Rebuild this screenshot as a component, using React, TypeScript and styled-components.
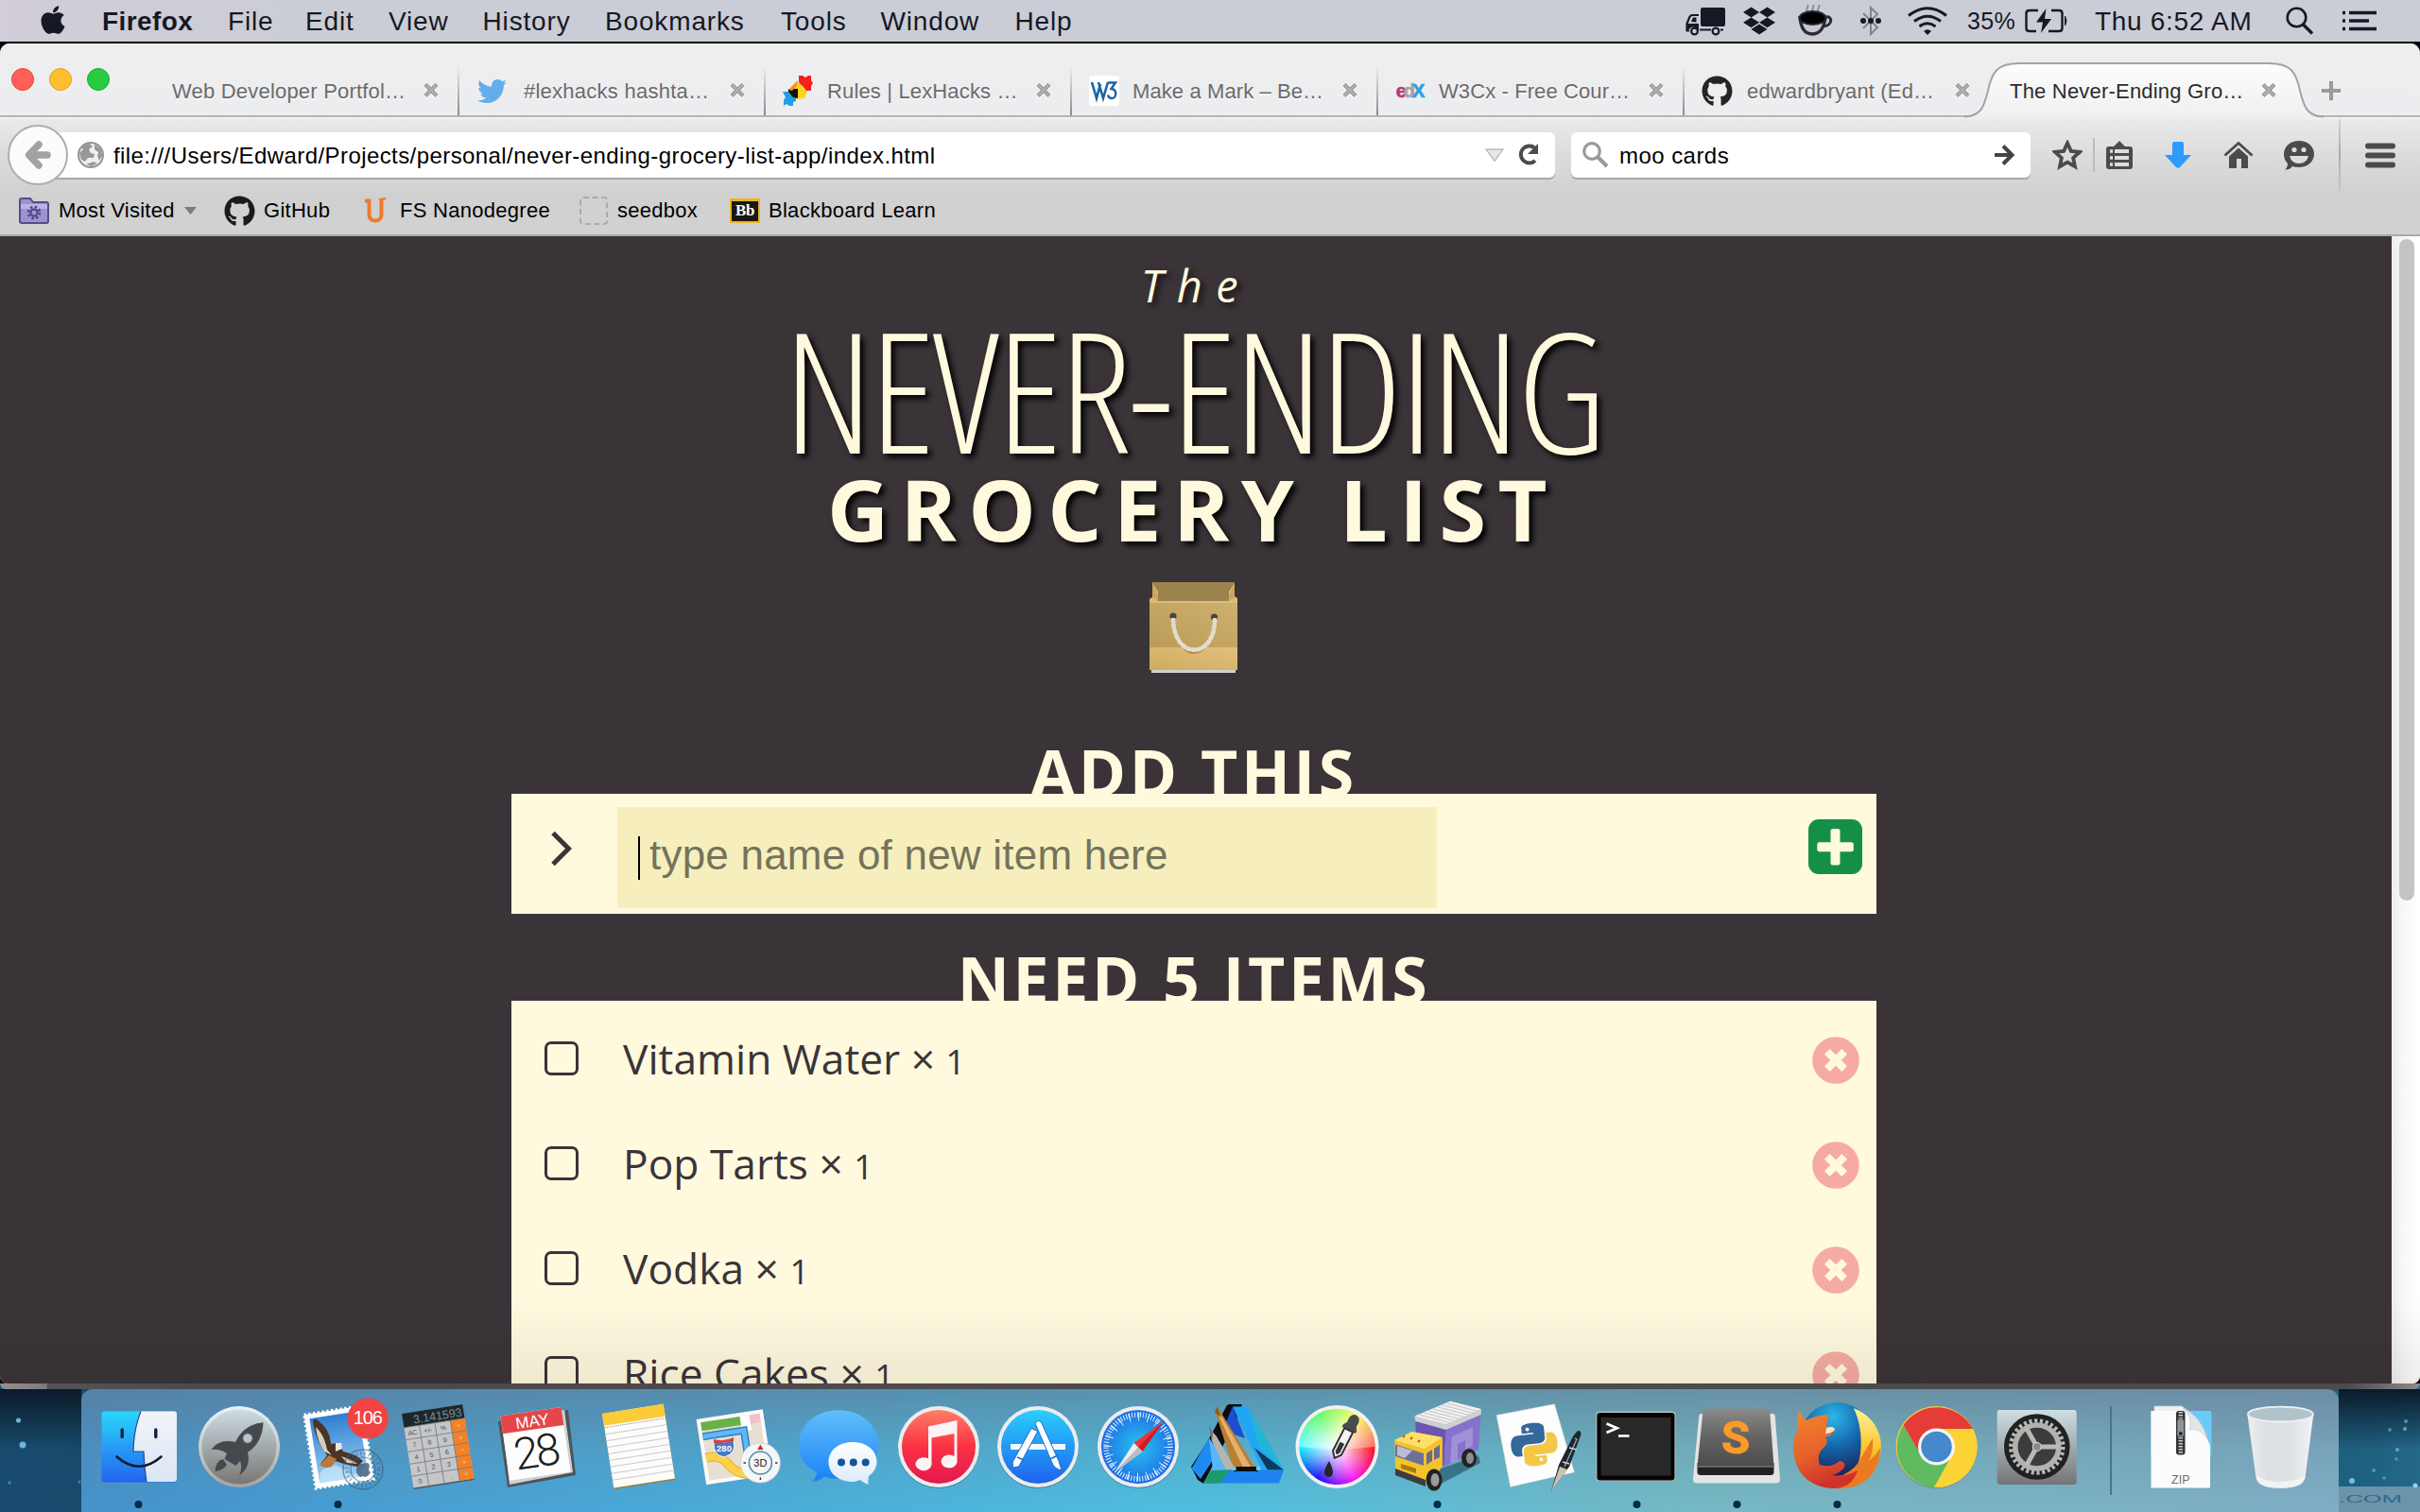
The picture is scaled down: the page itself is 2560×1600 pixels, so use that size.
import React from 'react';
import styled, { createGlobalStyle } from 'styled-components';
import { FaApple, FaDropbox, FaGithub, FaTwitter } from 'react-icons/fa';

const SANS = '"Liberation Sans", Arial, sans-serif';
const OPEN = '"Open Sans", "Noto Sans", sans-serif';
const CREAM = '#fff9de';
const INK = '#3a3438';

const GlobalStyle = createGlobalStyle`
  * { box-sizing: border-box; }
  html, body { margin: 0; padding: 0; background: #0c2a40; overflow: hidden; }
  svg { display: block; flex: none; }
`;

const Desktop = styled.div`
  width: 2560px;
  height: 1600px;
  overflow: hidden;
  display: flex;
  flex-direction: column;
  font-family: ${SANS};
  background: #01020c;
`;

/* ---------- menu bar ---------- */

const MenuBar = styled.header`
  height: 44px;
  flex: none;
  display: flex;
  align-items: center;
  justify-content: space-between;
  background: linear-gradient(90deg, #d2cdd8 0, #cacdd6 14%, #cacdd6 100%);
  color: #161824;
  font-size: 28px;
`;

const MenuGroup = styled.div`
  display: flex;
  align-items: center;
  height: 44px;
`;

const AppleSlot = styled.div`
  width: 108px;
  padding-left: 39px;
  margin-top: -3px;
`;

const MenuItem = styled.span<{ $w: number; $bold?: boolean }>`
  width: ${(p) => p.$w}px;
  padding-top: 1px;
  white-space: nowrap;
  letter-spacing: ${(p) => (p.$bold ? 0.4 : 0.85)}px;
  font-weight: ${(p) => (p.$bold ? 700 : 400)};
`;

const StatusSlot = styled.div<{ $w: number }>`
  width: ${(p) => p.$w}px;
  flex: none;
`;

const StatusText = styled.span<{ $w: number; $size: number; $ls: number }>`
  width: ${(p) => p.$w}px;
  flex: none;
  padding-top: 1px;
  white-space: nowrap;
  font-size: ${(p) => p.$size}px;
  letter-spacing: ${(p) => p.$ls}px;
`;

/* ---------- browser window ---------- */

const Window = styled.section`
  margin-top: 2px;
  height: 1418px;
  flex: none;
  display: flex;
  flex-direction: column;
  border-radius: 10px 10px 8px 8px;
  overflow: hidden;
  background: #eeeff0;
`;

const TabStrip = styled.div`
  height: 78px;
  flex: none;
  display: flex;
  align-items: flex-end;
  background: linear-gradient(#eeeeef, #ecedf0);
  border-bottom: 2px solid #b5b5b5;
`;

const Lights = styled.div`
  width: 162px;
  height: 76px;
  display: flex;
  align-items: center;
  gap: 16px;
  padding-left: 12px;
`;

const Light = styled.i<{ $fill: string; $edge: string }>`
  width: 24px;
  height: 24px;
  border-radius: 50%;
  background: ${(p) => p.$fill};
  border: 1px solid ${(p) => p.$edge};
`;

const Tab = styled.div<{ $active?: boolean; $divider?: boolean }>`
  position: relative;
  width: 324px;
  height: 52px;
  flex: none;
  display: flex;
  align-items: center;
  padding: 0 22px 0 18px;
  color: ${(p) => (p.$active ? '#2b2b2b' : '#6b6b6b')};
  font-size: 22px;
  background: ${(p) =>
    p.$divider
      ? 'linear-gradient(rgba(120,120,120,0), #8a8a8a) right 0 / 2px 100% no-repeat'
      : 'none'};
`;

const TabShape = styled.svg`
  position: absolute;
  left: -30px;
  top: -8px;
`;

const TabIcon = styled.span<{ $gap: number }>`
  width: 32px;
  height: 32px;
  flex: none;
  margin-right: ${(p) => p.$gap}px;
  display: flex;
  align-items: center;
  justify-content: center;
`;

const TabTitle = styled.span<{ $ls: number }>`
  position: relative;
  flex: 1;
  white-space: nowrap;
  padding: 2px 0 0 2px;
  letter-spacing: ${(p) => p.$ls}px;
  text-shadow: 0 2px 0 rgba(255, 255, 255, 0.6);
`;

const TabClose = styled.span`
  position: relative;
`;

const NewTab = styled.div`
  width: 130px;
  height: 52px;
  display: flex;
  align-items: center;
  padding-left: 26px;
`;

const NavArea = styled.div`
  height: 126px;
  flex: none;
  background: linear-gradient(#f6f6f6 0, #e9e9e9 3px, #dcdcdc 40px, #d0d0d0 84px, #d2d2d2 124px);
  border-bottom: 2px solid #a9a9a9;
`;

const NavBar = styled.div`
  height: 80px;
  display: flex;
  align-items: center;
  padding-left: 8px;
`;

const BackButton = styled.div`
  position: relative;
  z-index: 1;
  width: 64px;
  height: 64px;
  flex: none;
  border-radius: 50%;
  border: 2px solid #aeaeae;
  background: #fbfbfb;
  display: flex;
  align-items: center;
  justify-content: center;
`;

const Field = styled.div<{ $w: number; $url?: boolean }>`
  width: ${(p) => p.$w}px;
  height: 48px;
  flex: none;
  display: flex;
  align-items: center;
  background: #fff;
  border-radius: ${(p) => (p.$url ? '0 6px 6px 0' : '6px')};
  box-shadow: 0 2px 0 #a8a8a8;
  margin-left: ${(p) => (p.$url ? -20 : 17)}px;
  padding: ${(p) => (p.$url ? '0 10px 0 30px' : '0 16px 0 12px')};
  font-size: 24px;
  color: #000;
`;

const FieldText = styled.span<{ $ml: number; $ls: number }>`
  flex: 1;
  white-space: nowrap;
  margin-left: ${(p) => p.$ml}px;
  letter-spacing: ${(p) => p.$ls}px;
  padding-top: 2px;
`;

const ToolCell = styled.div<{ $w: number; $ml?: number }>`
  width: ${(p) => p.$w}px;
  margin-left: ${(p) => p.$ml || 0}px;
  height: 80px;
  flex: none;
  display: flex;
  align-items: center;
  justify-content: center;
`;

const ToolDivider = styled.i<{ $h: number; $ml: number; $c: string }>`
  width: 2px;
  height: ${(p) => p.$h}px;
  margin-left: ${(p) => p.$ml}px;
  background: ${(p) => p.$c};
`;

const Bookmarks = styled.div`
  height: 38px;
  display: flex;
  align-items: center;
  padding: 0 0 0 20px;
  font-size: 22px;
  color: #000;
`;

const Bookmark = styled.div<{ $w: number; $gap: number }>`
  width: ${(p) => p.$w}px;
  flex: none;
  display: flex;
  align-items: center;
  white-space: nowrap;
  letter-spacing: 0.28px;
  gap: ${(p) => p.$gap}px;
`;

/* ---------- page ---------- */

const Viewport = styled.div`
  position: relative;
  flex: 1;
  min-height: 0;
  display: flex;
  background: ${INK};
  overflow: hidden;
`;

const Page = styled.main`
  width: 2530px;
  padding-right: 4px;
  display: flex;
  flex-direction: column;
  align-items: center;
  color: ${CREAM};
  font-family: ${OPEN};
  & > * { flex-shrink: 0; }
`;

const Scrollbar = styled.div`
  width: 30px;
  flex: none;
  padding: 3px 6px 0 8px;
  background: linear-gradient(90deg, #ececec, #fafafa 50%, #fff);
`;

const Thumb = styled.div`
  height: 700px;
  border-radius: 8px;
  background: #c4c4c4;
`;

const TitleBlock = styled.h1`
  margin: 0;
  font-weight: 400;
  display: flex;
  flex-direction: column;
  align-items: center;
  text-shadow: 4px 4px 6px #000;
  white-space: nowrap;
`;

const TitleThe = styled.span`
  font-size: 47px;
  line-height: 104px;
  font-style: italic;
  letter-spacing: 14.5px;
  padding-left: 5px;
  text-shadow: 4px 4px 6px rgba(0, 0, 0, 0.7);
`;

const TitleNever = styled.span`
  font-size: 176.5px;
  line-height: 115px;
  font-weight: 300;
  font-stretch: 75%;
  letter-spacing: -2.1px;
`;

const TitleGrocery = styled.span`
  font-size: 90px;
  line-height: 139px;
  font-weight: 700;
  letter-spacing: 12.4px;
  padding-right: 2px;
`;

const BagSlot = styled.div`
  margin-top: 8px;
`;

const SectionTitle = styled.h2<{ $mt: number }>`
  margin: ${(p) => p.$mt}px 0 0;
  height: 46px;
  line-height: 46px;
  font-size: 68px;
  font-weight: 700;
  letter-spacing: 3.6px;
  white-space: nowrap;
`;

const AddCard = styled.div`
  position: relative;
  width: 1444px;
  height: 127px;
  background: ${CREAM};
  display: flex;
  align-items: center;
  padding: 0 15px 0 41px;
`;

const AddInput = styled.div`
  width: 867px;
  height: 107px;
  margin: 8px auto 0 48px;
  background: #f6efbd;
  display: flex;
  align-items: center;
  padding: 0 0 5px 22px;
  font-family: ${SANS};
  font-size: 44px;
  letter-spacing: 0.22px;
  color: #75735b;
`;

const Caret = styled.i`
  width: 2px;
  height: 46px;
  margin: 5px 10px 0 0;
  background: #000;
`;

const ChevronSlot = styled.div`
  margin-top: -11px;
`;

const AddIcon = styled.div`
  margin-top: -15px;
`;

const List = styled.ul`
  position: relative;
  width: 1444px;
  margin: 0;
  padding: 7px 18px 0 35px;
  list-style: none;
  background: ${CREAM};
  color: ${INK};
`;

const Item = styled.li`
  height: 111px;
  display: flex;
  align-items: center;
  font-size: 44.3px;
  line-height: 62px;
  white-space: nowrap;
`;

const Check = styled.i`
  width: 36px;
  height: 36px;
  border: 3px solid ${INK};
  border-radius: 7px;
  margin: -4px 47px 0 0;
`;

const ItemName = styled.span`
  flex: 1;
`;

const Qty = styled.span`
  font-size: 36px;
`;

const DockShade = styled.div`
  position: absolute;
  left: 0;
  right: 0;
  bottom: 0;
  height: 90px;
  background: linear-gradient(rgba(20, 10, 0, 0), rgba(20, 10, 0, 0.07));
`;

/* ---------- dock ---------- */

const DockZone = styled.footer`
  position: relative;
  flex: 1;
  display: flex;
  flex-direction: column;
  background: linear-gradient(90deg, #194b6e 0, #14405f 50%, #1f6180 98%, #24688a 100%);
`;

const WindowEdge = styled.div`
  height: 6px;
  border-radius: 0 0 8px 8px;
  background: linear-gradient(90deg, #958f90 0, #7d787a 49px, #555356 50px, #4b4a4d 200px, #4b4a4d 97%, #8e8a8b 100%);
`;

const DockRow = styled.div`
  flex: 1;
  display: flex;
`;

const Wallpaper = styled.div<{ $w: number }>`
  width: ${(p) => p.$w}px;
  flex: none;
  background: linear-gradient(#0a1a28, rgba(10, 26, 40, 0) 50%);
`;

const Dock = styled.nav`
  width: 2388px;
  height: 130px;
  flex: none;
  display: flex;
  padding-left: 8px;
  border-radius: 12px 12px 0 0;
  background:
    linear-gradient(rgba(95, 120, 145, 0.62), rgba(95, 130, 150, 0.25) 50%, rgba(95, 130, 150, 0)),
    linear-gradient(90deg, #4592cb 0, #49a6d7 22%, #4fbfe0 50%, #76b9c4 72%, #80aec6 100%);
`;

const DockCell = styled.div`
  width: 105.7px;
  flex: none;
`;

const DockSeparator = styled.div`
  width: 46px;
  display: flex;
  justify-content: center;
  padding-top: 18px;
  &::before {
    content: '';
    width: 2px;
    height: 94px;
    background: #4b7587;
    margin-left: 4px;
  }
`;

/* ---------- small drawings ---------- */

const CloseX = () => (
  <svg width="16" height="16" viewBox="0 0 16 16">
    <path d="M2 2.5 14 14.5M14 2.5 2 14.5" stroke="#fff" strokeWidth="4.5" />
    <path d="M2 1.5 14 13.5M14 1.5 2 13.5" stroke="#8b8b8b" strokeWidth="4" />
    <path d="M2.4 1.9 13.6 13.1M13.6 1.9 2.4 13.1" stroke="#b0b0b0" strokeWidth="2.2" />
  </svg>
);

const LexIcon = () => (
  <svg width="32" height="32" viewBox="0 0 32 32">
    <path d="M17 0h4l3 2 3-2h3v5l2 3-2 3v5h-5l-4-5-4-2z" fill="#f8201c" />
    <path d="M0 17h6l8 6v4l-3 1v4H7l-3-2-3 2v-6l2-3z" fill="#1f9fe2" />
    <path d="M17 7 26 17 23 24 15 25 5 16z" fill="#fdd521" />
    <path d="M6 14h10v10l-5-1-5-6z" fill="#111" />
    <path d="M6 15 16 5l-1 6-5 5z" fill="#fb8d1c" />
  </svg>
);

const W3Icon = () => (
  <svg width="32" height="32" viewBox="0 0 32 32">
    <rect width="32" height="32" rx="3" fill="#fff" />
    <path d="M3 7 8 24 12 9M10 7 15 24 20 7" fill="none" stroke="#1a64a8" strokeWidth="2.600" />
    <path d="M20 7.500H28L23.500 14C30 14.500 29.500 24 24 24 21.500 24 20.500 22.500 20 20.500" fill="none" stroke="#1a64a8" strokeWidth="2.400" />
  </svg>
);

const EdxText = styled.span<{ $c: string; $ml?: number }>`
  color: ${(p) => p.$c};
  font-size: 20px;
  font-weight: 700;
  line-height: 32px;
  margin-left: ${(p) => p.$ml || 0}px;
  -webkit-text-stroke: 0.6px ${(p) => p.$c};
`;

const EdxIcon = () => (
  <>
    <EdxText $c="#b5377a">e</EdxText>
    <EdxText $c="#a5a0a6" $ml={-3}>d</EdxText>
    <EdxText $c="#2aa0e0" $ml={-3}>X</EdxText>
  </>
);

const BlackboardBadge = styled.span`
  width: 32px;
  height: 26px;
  border: 2px solid #e8b421;
  border-top-width: 3px;
  background: #1a1712;
  color: #fff;
  font: 700 17px/19px "Liberation Serif", serif;
  letter-spacing: -0.5px;
  text-align: center;
`;

const SeedboxIcon = styled.span`
  width: 30px;
  height: 30px;
  border: 2px dashed #aaa;
  border-radius: 4px;
`;

const UdacityMark = () => (
  <svg width="24" height="28" viewBox="0 0 24 28">
    <path d="M1 3.500H5.500V18C5.500 27 18 26 18.500 19V3" fill="none" stroke="#f07a2a" strokeWidth="4" />
    <path d="M16 2.500 23 1" stroke="#f07a2a" strokeWidth="2.500" />
  </svg>
);

const FolderIcon = () => (
  <svg width="32" height="30" viewBox="0 0 32 30">
    <path d="M1 4a2 2 0 0 1 2-2h9l3 4h14a2 2 0 0 1 2 2v18a2 2 0 0 1-2 2H3a2 2 0 0 1-2-2z" fill="#9a93cf" stroke="#544c8c" strokeWidth="2" />
    <path d="M2 8h28v5H2z" fill="#b9b4e4" />
    <circle cx="16" cy="17" r="6" fill="none" stroke="#4b447f" strokeWidth="2.600" strokeDasharray="2.400 2.300" />
    <circle cx="16" cy="17" r="3.600" fill="none" stroke="#4b447f" strokeWidth="2" />
  </svg>
);

const GlobeIcon = () => (
  <svg width="28" height="28" viewBox="0 0 28 28">
    <circle cx="14" cy="14" r="13" fill="#f0f0f0" stroke="#949494" strokeWidth="2" />
    <path d="M2 12 6 8 4 6Q9 2 13 2L16 5 12 8 14 12 18 13 17 17 11 17 8 21 4 19z" fill="#989898" />
    <path d="M18 3Q26 6 26 15L23 20 21 15 22 11 18 8z" fill="#989898" />
    <path d="M9 24 15 26 21 23 17 21z" fill="#989898" />
  </svg>
);

const ReloadIcon = () => (
  <svg width="26" height="26" viewBox="0 0 26 26">
    <path d="M20.500 5.500A9 9 0 1 0 21 19" fill="none" stroke="#4c4c4c" strokeWidth="4" />
    <path d="M24 1V12H13z" fill="#4c4c4c" />
  </svg>
);

const StatusIcons = () => (
  <>
    <StatusSlot $w={61}>
      <svg width="42" height="31" viewBox="0 0 42 31">
        <rect x="16" y="1" width="26" height="20" rx="2" fill="#161824" />
        <path d="M14 9H7.500C5 9 4.500 10 4 12L1.500 18V25.500H4" fill="none" stroke="#161824" strokeWidth="2.200" />
        <path d="M6 16 8 11.500H11.500V16.500z" fill="#161824" />
        <path d="M2 18H14V25H13A5 5 0 0 0 4 24L2 25z" fill="#161824" />
        <path d="M15 24.500H27M37 24.500H40" stroke="#161824" strokeWidth="2.200" />
        <circle cx="9.500" cy="26" r="3.400" fill="#cacdd6" stroke="#161824" strokeWidth="2.200" />
        <circle cx="32" cy="26" r="3.400" fill="#cacdd6" stroke="#161824" strokeWidth="2.200" />
      </svg>
    </StatusSlot>
    <StatusSlot $w={57}><FaDropbox size={34} /></StatusSlot>
    <StatusSlot $w={67}>
      <svg width="40" height="34" viewBox="0 0 40 34">
        <path d="M11 7C8 5 13 3 11 0M17 7C14 5 19 3 17 0M23 7C20 5 25 3 23 0" fill="none" stroke="#8e9099" strokeWidth="2" />
        <path d="M3 12C4 27 10 31 16 31S29 27 30 12" fill="#c5c8d0" stroke="#2a2b33" strokeWidth="3.500" />
        <ellipse cx="16.500" cy="14" rx="14" ry="7" fill="#000" stroke="#25262e" strokeWidth="2" />
        <path d="M30 13C38 11 38 23 27 23" fill="none" stroke="#2a2b33" strokeWidth="3" />
      </svg>
    </StatusSlot>
    <StatusSlot $w={50}>
      <svg width="22" height="32" viewBox="0 0 22 32">
        <path d="M3 8 18 23 11 30V2L18 9 3 24" fill="none" stroke="#80838d" strokeWidth="2" />
        <circle cx="3" cy="16" r="3" fill="#161824" />
        <circle cx="11" cy="16" r="3" fill="#161824" />
        <circle cx="19" cy="16" r="3" fill="#161824" />
      </svg>
    </StatusSlot>
    <StatusSlot $w={63}>
      <svg width="42" height="30" viewBox="0 0 42 30">
        <path d="M1 9.500Q21-6 41 9.500M7 15.500Q21 5 35 15.500M12.500 21Q21 14.500 29.500 21" fill="none" stroke="#161824" strokeWidth="2.900" />
        <path d="M17 26Q21 22.500 25 26L21 30z" fill="#161824" />
      </svg>
    </StatusSlot>
    <StatusText $w={61} $size={25} $ls={0.3}>35%</StatusText>
    <StatusSlot $w={74}>
      <svg width="46" height="26" viewBox="0 0 46 26">
        <path d="M14 2H5Q1.500 2 1.500 5V21Q1.500 24 5 24H12M28 2H36Q39.500 2 39.500 5V21Q39.500 24 36 24H25" fill="none" stroke="#161824" strokeWidth="2.400" />
        <path d="M42.500 8Q45.500 13 42.500 18z" fill="#161824" stroke="#161824" />
        <path d="M22.500 0 12 14.500H19L17 26 28 11H21z" fill="#161824" />
      </svg>
    </StatusSlot>
    <StatusText $w={202} $size={28} $ls={0.7}>Thu 6:52 AM</StatusText>
    <StatusSlot $w={60}>
      <svg width="30" height="30" viewBox="0 0 30 30">
        <circle cx="11.500" cy="11.500" r="9.800" fill="none" stroke="#161824" strokeWidth="2.600" />
        <path d="M18.500 19 28 28.500" stroke="#161824" strokeWidth="3.400" />
      </svg>
    </StatusSlot>
    <StatusSlot $w={82}>
      <svg width="38" height="22" viewBox="0 0 38 22">
        <path d="M0 2.500H3M0 11H3M0 19.500H3M7 2.500H36M7 11H28M7 19.500H36" stroke="#161824" strokeWidth="3.600" />
      </svg>
    </StatusSlot>
  </>
);

const BagIcon = () => (
  <svg width="94" height="96" viewBox="0 0 94 96">
    <defs>
      <linearGradient id="bagA" x1="0" y1="1" x2="1" y2="0"><stop offset="0" stopColor="#ba9b58" /><stop offset="1" stopColor="#cfb06d" /></linearGradient>
      <linearGradient id="bagB" x1="0" y1="1" x2="1" y2="0"><stop offset="0" stopColor="#cfab60" /><stop offset="1" stopColor="#e2c07a" /></linearGradient>
    </defs>
    <path d="M3 0H90V24H3z" fill="#9c824c" />
    <path d="M3 1 9 10V21H0V18L3 16zM90 1 84 10V21H93V17L90 15z" fill="#dfba6c" />
    <path d="M3 1 9 14V20L3 16zM90 1 84 14V20L90 16z" fill="#c9a75f" />
    <path d="M0 20H93V70H0z" fill="url(#bagA)" />
    <path d="M0 20H93V22H0z" fill="#d9bd82" />
    <path d="M0 69H93V93H0z" fill="url(#bagB)" />
    <path d="M2 93H91V96H2z" fill="#cfd0d4" />
    <circle cx="25" cy="36" r="3.600" fill="#4b453f" />
    <circle cx="68.500" cy="37" r="3.600" fill="#4b453f" />
    <path d="M27 60Q47 92 67 60L65 58Q47 84 30 58z" fill="#ad8c45" />
    <path d="M25 38C25 83 70 83 69 38" fill="none" stroke="#e2dccf" strokeWidth="4.600" strokeDasharray="5 1" />
    <path d="M25 38C25 83 70 83 69 38" fill="none" stroke="#e2dccf" strokeWidth="3.600" />
  </svg>
);

const RemoveIcon = () => (
  <svg width="50" height="50" viewBox="0 0 50 50">
    <circle cx="25" cy="25" r="24.800" fill="#f6aba2" />
    <path d="M15.800 15.800 34.200 34.200M34.200 15.800 15.800 34.200" stroke={CREAM} strokeWidth="8" />
  </svg>
);

/* ---------- dock icons, each on a 106 x 130 tile ---------- */

const Tile = ({ children, running }: { children: React.ReactNode; running?: boolean }) => (
  <DockCell>
    <svg width="106" height="130" viewBox="0 0 106 130" fontFamily={SANS}>
      {children}
      {running && <circle cx="52.500" cy="122" r="4" fill="#032a48" />}
    </svg>
  </DockCell>
);

const Grad = ({ id, a, b, c }: { id: string; a: string; b: string; c?: string }) => (
  <defs>
    <linearGradient id={id} x1="0" y1="0" x2="0" y2="1">
      <stop offset="0" stopColor={a} />
      {c && <stop offset=".5" stopColor={c} />}
      <stop offset="1" stopColor={b} />
    </linearGradient>
  </defs>
);

const Finder = () => (
  <Tile running>
    <Grad id="fi" a="#2ad6fd" b="#2364ee" />
    <Grad id="fj" a="#f2f3f8" b="#dbe6f3" />
    <rect x="13.500" y="23.500" width="79.500" height="75" rx="3" fill="url(#fi)" />
    <path d="M55 23.500H90a3 3 0 0 1 3 3V95a3 3 0 0 1-3 3H61Q58.500 83 58 66H47Q47.500 42 55 23.500z" fill="url(#fj)" />
    <path d="M55 23.500Q47.500 42 47 66H58Q58.500 83 61 98" fill="none" stroke="#1c4f9c" strokeWidth="1.200" />
    <path d="M35.200 43V50.500M70.800 43V50.500" stroke="#13223a" strokeWidth="3.400" strokeLinecap="round" />
    <path d="M29.500 71.500Q53 92 76.500 71.500" fill="none" stroke="#131c2c" strokeWidth="2.600" strokeLinecap="round" />
  </Tile>
);

const Launchpad = () => (
  <Tile>
    <Grad id="la" a="#cddde3" b="#797673" />
    <Grad id="lb" a="#e8f4f8" b="#a5a3a1" />
    <circle cx="53" cy="61" r="43" fill="url(#lb)" />
    <circle cx="53" cy="61" r="39.500" fill="url(#la)" />
    <path d="M78.500 35.300Q58 37 49 56Q32 52 23.400 64Q32 63 40 68L37.500 74L49.500 81L54 76Q57 84 53 91.500Q66 82 62 67Q78 56 78.500 35.300z" fill="#45494d" />
    <path d="M36 74Q28 76 27.500 87Q36 86 40 80" fill="#45494d" />
    <circle cx="62" cy="52" r="5.200" fill="#b9c4c8" stroke="#5d6266" strokeWidth="1" />
  </Tile>
);

const Mail = () => (
  <Tile running>
    <Grad id="ma" a="#2f7fd0" b="#9bd0f4" />
    <g transform="translate(15.500 26.300) rotate(-9)">
      <rect x="1" y="1" width="62" height="79" fill="#fff" />
      <rect x="1" y="1" width="62" height="79" fill="none" stroke="#fff" strokeWidth="3" strokeDasharray="2.200 2.600" />
      <rect x="6" y="6" width="52" height="69" fill="url(#ma)" />
      <path d="M8 64Q24 52 34 66T58 60V75H6z" fill="#d5ecfb" opacity=".6" />
    </g>
    <path d="M26 33Q29 30 32 34Q44 42 45 58L53 57L58 66Q70 68 79 76L73 82Q60 80 50 76L46 80Q38 84 34 79L41 70Q28 54 26 33z" fill="#4a3423" />
    <path d="M29 40Q38 48 41 64L46 70L38 66Q30 54 29 40zM56 71Q66 74 73 79L62 78z" fill="#d6cdbf" />
    <path d="M33 80L43 70L51 74L46 82Q38 85 33 80z" fill="#b77a3a" />
    <path d="M50 57L56 57L57 63L50 66z" fill="#efe8da" />
    <circle cx="79" cy="85" r="21" fill="none" stroke="#3d5a74" strokeWidth="1.400" opacity=".6" />
    <circle cx="79" cy="85" r="13" fill="none" stroke="#3d5a74" strokeWidth="1.200" opacity=".6" />
    <circle cx="79" cy="85" r="17" fill="none" stroke="#3d5a74" strokeWidth="4" strokeDasharray="1.500 3" opacity=".45" />
    <path d="M79 79Q86 76 86 82Q84 86 87 88Q83 95 79 92Q75 95 72 88Q71 78 79 79z" fill="#35536e" opacity=".75" />
    <circle cx="84.300" cy="31" r="21.600" fill="#f14343" />
    <text x="84.300" y="37.300" fontSize="20" textAnchor="middle" fill="#fff" textLength="31">106</text>
  </Tile>
);

const calcKeys = ['AC', '+/-', '%', '÷', '7', '8', '9', '×', '4', '5', '6', '−', '1', '2', '3', '+', '0', '', '.', '='];

const Calculator = () => (
  <Tile>
    <g transform="translate(14 26) rotate(-8.900)">
      <rect width="65" height="81" fill="#55585a" />
      <rect width="65" height="79.500" fill="#c5c6c9" />
      <rect width="65" height="15" fill="#1c272c" />
      <rect x="49.500" y="15" width="15.500" height="64.500" fill="#f28128" />
      {[15, 28, 41, 54, 67].map((y) => <path key={y} d={`M0 ${y}H65`} stroke="#77797c" strokeWidth=".8" />)}
      {[16.5, 33, 49.5].map((x) => <path key={x} d={`M${x} 15V79`} stroke="#77797c" strokeWidth=".8" />)}
      {calcKeys.map((k, i) => (
        <text key={i} x={8.2 + (i % 4) * 16.4} y={24 + Math.floor(i / 4) * 13} fontSize="7" textAnchor="middle" fill={i % 4 === 3 ? '#fbd3b2' : '#4d4f52'}>{k}</text>
      ))}
      <text x="63" y="12.300" fontSize="12.500" textAnchor="end" fill="#7f8f95">3.141593</text>
    </g>
  </Tile>
);

const Calendar = () => (
  <Tile>
    <path d="M10 34 84 22 92 91 20 104z" fill="#4c555b" />
    <path d="M14 34 80 22 89 88 22 101z" fill="#cfd1d3" />
    <g transform="translate(12.300 28.500) rotate(-8.300)">
      <rect width="65" height="69" fill="#fdfdfd" />
      <rect width="65" height="19" fill="#e4474a" />
      <text x="32.500" y="16" fontSize="17" textAnchor="middle" fill="#fff">MAY</text>
      <text x="33" y="59" fontSize="47" fontFamily="Roboto, sans-serif" fontWeight="300" textAnchor="middle" fill="#1e1e1e" textLength="49">28</text>
    </g>
  </Tile>
);

const Notes = () => (
  <Tile>
    <g transform="translate(15 26) rotate(-8.900)">
      <rect width="65.500" height="81" fill="#9a7f3c" />
      <rect width="65.500" height="79.500" fill="#fcfcfa" />
      <rect width="65.500" height="13" fill="#fccb38" />
      <path d="M0 15H65.500" stroke="#8d8d86" strokeWidth="1" strokeDasharray="1.200 1.200" />
      {[22, 29, 36, 43, 50, 57, 64, 71].map((y) => <path key={y} d={`M0 ${y}H65`} stroke="#c9cacb" strokeWidth="1" />)}
    </g>
  </Tile>
);

const Maps = () => (
  <Tile>
    <g transform="translate(8.600 32) rotate(-8.700)">
      <rect width="71" height="70" fill="#fbfbf9" />
      <rect x="4" y="4" width="63" height="62" fill="#e6dfd2" />
      <rect x="4" y="4" width="42" height="9" fill="#69b248" />
      <rect x="46" y="4" width="10" height="16" fill="#fff" />
      <rect x="56" y="4" width="11" height="9" fill="#f2bfcb" />
      <path d="M4 19H48V50" fill="none" stroke="#2f7fc4" strokeWidth="8" />
      <path d="M4 19H48V50" fill="none" stroke="#5fb8f2" strokeWidth="5" />
      <path d="M4 42Q20 40 26 52Q34 64 46 66" fill="none" stroke="#f0b429" strokeWidth="10" />
      <path d="M4 42Q20 40 26 52Q34 64 46 66" fill="none" stroke="#fbd04b" strokeWidth="7.500" />
    </g>
    <path d="M27 56Q38 58 48 54Q52 68 38 72Q26 70 27 56z" fill="#4a78c4" stroke="#fff" strokeWidth="1" />
    <path d="M27 53Q38 56 48 51L48 55Q38 58 27 57z" fill="#d7424a" />
    <text x="38" y="66" fontSize="9.500" fontWeight="700" textAnchor="middle" fill="#fff">280</text>
    <circle cx="76.400" cy="78" r="21" fill="#f5f6f8" stroke="#c9cdd2" strokeWidth=".8" />
    <circle cx="76.400" cy="78" r="12" fill="none" stroke="#568aa4" strokeWidth="1.600" />
    <path d="M76.400 58.500 79.500 64H73.300z" fill="#d8202a" />
    <path d="M58.500 78H61M92 78H94.500M76.400 93.500V96" stroke="#333" strokeWidth="1.500" />
    <text x="76.400" y="82" fontSize="11" textAnchor="middle" fill="#222">3D</text>
  </Tile>
);

const Messages = () => (
  <Tile>
    <Grad id="me" a="#60bffa" b="#1b82f8" />
    <Grad id="mf" a="#ffffff" b="#dceafa" />
    <path d="M53 22.300C77 22.300 95.200 38 95.200 59S77 95 53 95Q44 95 38 92.500Q33 98 25 97.500Q30 93 30 88Q11 78 11 59C11 38 29 22.300 53 22.300z" fill="url(#me)" />
    <path d="M68 56C83 56 93.500 65 93.500 77Q93.500 86 85 92Q84 97 84.500 101Q79 99 76 96Q72 98 68 98C53 98 42.500 89 42.500 77S53 56 68 56z" fill="url(#mf)" />
    <circle cx="56" cy="77.500" r="4" fill="#12559c" />
    <circle cx="68.800" cy="77.500" r="4" fill="#12559c" />
    <circle cx="81.700" cy="77.500" r="4" fill="#12559c" />
  </Tile>
);

const Disc = ({ id, a, b, c, children, r = 39 }: { id: string; a: string; b: string; c?: string; r?: number; children?: React.ReactNode }) => (
  <>
    <Grad id={id} a={a} b={b} c={c} />
    <circle cx="53" cy="62" r="43" fill="rgba(20,50,70,.35)" />
    <circle cx="53" cy="61" r="43" fill="#ececee" />
    <circle cx="53" cy="61" r={r} fill={`url(#${id})`} />
    {children}
  </>
);

const ITunes = () => (
  <Tile>
    <Disc id="it" a="#ff7e66" b="#e3184f" c="#fb3144">
      <path d="M42 39.500 72.500 33V77.500A8.500 7 0 1 1 69.500 71V47L45.500 51.500V80A8.500 7 0 1 1 42 73.500z" fill="#fcf3f4" />
    </Disc>
  </Tile>
);

const AppStore = () => (
  <Tile>
    <Disc id="as" a="#29cefc" b="#1e63ee">
      <rect x="24" y="58" width="58" height="6" fill="#f4f8fd" />
      <path d="M45 41 52 44 34 82 28 84 27 78z" fill="#fafcff" stroke="#1f6fc8" strokeWidth="1" transform="rotate(3 40 60)" />
      <path d="M50 36Q54 31 57 36L75 76 78 86Q70 84 68 78z" fill="#fafcff" stroke="#1f6fc8" strokeWidth="1" />
      <path d="M66 74 74 70M31 72 38 75" stroke="#1f6fc8" strokeWidth="1.600" />
    </Disc>
  </Tile>
);

const Safari = () => (
  <Tile>
    <defs>
      <radialGradient id="sa"><stop offset="0" stopColor="#28c5ee" /><stop offset="1" stopColor="#1e70e6" /></radialGradient>
    </defs>
    <Disc id="sx" a="#1e8df5" b="#1e5fe0">
      <circle cx="53" cy="61" r="38.500" fill="url(#sa)" />
      <circle cx="53" cy="61" r="34" fill="none" stroke="#e5f2fd" strokeWidth="5.500" strokeDasharray="1 2" />
      <circle cx="53" cy="61" r="32" fill="none" stroke="#e5f2fd" strokeWidth="9" strokeDasharray="1 9.053" />
      <path d="M80 34 57.500 66 48.500 57z" fill="#f0343b" />
      <path d="M80 34 57.500 66 53 61.500z" fill="#c81f25" />
      <path d="M28 88 57.500 66 48.500 57z" fill="#ededed" />
      <path d="M28 88 57.500 66 53 61.500z" fill="#b9bcc0" />
    </Disc>
  </Tile>
);

const Designer = () => (
  <Tile>
    <path d="M41 17 43 16H57L50 34L16 100L10 96L3 82L20 56z" fill="#0a0d12" />
    <path d="M47 18.500H63L101 85.500L96.500 90H80z" fill="#22a5f6" />
    <path d="M63 18.500 101 85.500 74 60z" fill="#1fb6d8" />
    <path d="M70 62 101 85.500H84z" fill="#0c3a5c" />
    <path d="M47 18.500 36 44 60 52z" fill="#1b4fd0" />
    <path d="M16 99.500 26 85.500H101L96 99.500z" fill="#1e83f0" />
    <path d="M16 99.500 24 86 44 85.500 34 99.500z" fill="#1d9a6c" />
    <path d="M3.500 84 22 52 32 66 13 95z" fill="#1f8bf2" />
    <path d="M22 52 32 66 44 85 26 86z" fill="#58b7f5" />
    <path d="M28 22 33 22 70 82 60 85.500 48 85z" fill="#b97d33" />
    <path d="M31 26 36 30 66 82 58 83z" fill="#e2b26c" />
    <path d="M28 24 31 18 34 30z" fill="#8b5b1c" />
    <path d="M23 42 30 50 50 85 40 85 25 55z" fill="#b9b3ae" />
    <path d="M22 38 26 47 25 55z" fill="#6e6a68" />
    <path d="M48 84.500H74" stroke="#0b0e12" strokeWidth="5" />
    <rect x="46.500" y="82" width="4" height="4" fill="#5fd0f0" />
    <rect x="72" y="82" width="4" height="4" fill="#5fd0f0" />
  </Tile>
);

const wheel = Array.from({ length: 60 }, (_, i) => {
  const a0 = ((i * 6 - 90 - 0.4) * Math.PI) / 180;
  const a1 = ((i * 6 - 84 + 0.4) * Math.PI) / 180;
  const p = (a: number) => `${52.5 + 40 * Math.cos(a)} ${61 + 40 * Math.sin(a)}`;
  return { d: `M52.5 61L${p(a0)}A40 40 0 0 1 ${p(a1)}z`, fill: `hsl(${(450 - i * 6) % 360} 95% 52%)` };
});

const ColorPicker = () => (
  <Tile>
    <defs>
      <radialGradient id="cw"><stop offset="0" stopColor="#fff" /><stop offset=".35" stopColor="#fff" stopOpacity=".65" /><stop offset="1" stopColor="#fff" stopOpacity="0" /></radialGradient>
    </defs>
    <circle cx="52.500" cy="61" r="44" fill="#f1f1f1" />
    {wheel.map((s, i) => <path key={i} d={s.d} fill={s.fill} />)}
    <circle cx="52.500" cy="61" r="40" fill="url(#cw)" />
    <path d="M12.500 61A40 40 0 0 1 92.500 61Q52 66 12.500 61z" fill="#fff" opacity=".35" />
    <g transform="translate(67 39) rotate(27)">
      <path d="M-5.500-2Q-7-12 0-13Q7-12 5.500-2L8 2V5H-8V2z" fill="#4a4b4e" />
      <path d="M-5 5V32L0 38L5 32V5z" fill="#f3f3f3" stroke="#333" strokeWidth="2" />
      <path d="M-2.500 20H2.500V31L0 34-2.500 31z" fill="#333" />
    </g>
    <path d="M44 76Q38 86 39 89A4.500 4.500 0 0 0 48 88Q48 84 44 76z" fill="#262626" />
  </Tile>
);

const Truck = () => (
  <Tile running>
    <path d="M45 106 98 78 96 70 56 84z" fill="rgba(20,50,70,.5)" />
    <path d="M29.300 33 61.700 42 59.600 82 30 60z" fill="#6a55b3" />
    <path d="M61.700 42 98.700 26 95.800 64 59.600 82z" fill="#8672cc" />
    <path d="M68 50 90 40V60L82 64V54L74 58V76L66 78z" fill="#a597dc" opacity=".8" />
    <path d="M28.400 29 66.300 12.700 99 21.700 98.700 27 61.700 43 29.300 34z" fill="#cfcfcf" />
    <path d="M28.400 28.500 66.300 12.700 99 21 61.700 37z" fill="#f1f1f1" />
    {[0, 1, 2, 3, 4, 5, 6].map((i) => <path key={i} d={`M${33 + i * 5} ${27 - i * 2}l33 8.5`} stroke="#c4c4c4" strokeWidth="1" />)}
    <ellipse cx="86" cy="73" rx="8" ry="10" fill="#222" />
    <ellipse cx="87" cy="73" rx="4" ry="6" fill="#8d8d8d" />
    <path d="M7.400 54 25.500 45 57.900 51V82L40 101 8 88z" fill="#f3c32d" />
    <path d="M7.400 54 25.500 45 57.900 51 39 63z" fill="#fbe06a" />
    <path d="M8 58.500 38 68V81L8 71z" fill="#6f7194" />
    <path d="M10 60 26 65 18 73 10 70z" fill="#b9bdd6" />
    <path d="M41 68 47 64V76L41 80zM49 63 55 59V72L49 75z" fill="#6a6a90" />
    <path d="M8 84 40 96V103L8 91z" fill="#3c3c42" />
    <path d="M14 79 30 84V89L14 84z" fill="#a97a12" />
    <path d="M16 51l2-2M24 53l2-2M32 56l2-2" stroke="#c5531c" strokeWidth="2" />
    <ellipse cx="49" cy="96" rx="8.500" ry="11.500" fill="#222" />
    <ellipse cx="50" cy="96" rx="4.500" ry="7" fill="#9b9b9b" />
  </Tile>
);

const snake =
  'M14.25.18l.9.2.73.26.59.3.45.32.34.34.25.34.16.33.1.3.04.26.02.2-.01.13V8.5l-.05.63-.13.55-.21.46-.26.38-.3.31-.33.25-.35.19-.35.14-.33.1-.3.07-.26.04-.21.02H8.77l-.69.05-.59.14-.5.22-.41.27-.33.32-.27.35-.2.36-.15.37-.1.35-.07.32-.04.27-.02.21v3.06H3.17l-.21-.03-.28-.07-.32-.12-.35-.18-.36-.26-.36-.36-.35-.46-.32-.59-.28-.73-.21-.88-.14-1.05-.05-1.23.06-1.22.16-1.04.24-.87.32-.71.36-.57.4-.44.42-.33.42-.24.4-.16.36-.1.32-.05.24-.01h.16l.06.01h8.16v-.83H6.18l-.01-2.75-.02-.37.05-.34.11-.31.17-.28.25-.26.31-.23.38-.2.44-.18.51-.15.58-.12.64-.1.71-.06.77-.04.84-.02 1.27.05z';

const Python = () => (
  <Tile>
    <path d="M9 27.500 70.500 15.700 91.500 88 23.700 103.500z" fill="#fdfdfd" stroke="#c7c7c7" strokeWidth=".6" />
    <g transform="translate(49 58.500) rotate(-6) scale(2.050 1.900) translate(-12 -12)">
      <path d={snake} fill="#35699b" />
      <path d={snake} fill="#f3c846" transform="rotate(180 12 12)" />
      <circle cx="9.200" cy="3.300" r="1" fill="#fff" />
      <circle cx="14.800" cy="20.700" r="1" fill="#fff" />
    </g>
    <path d="M94 45Q98 42 98.500 48L86 82 67 108 75 80 90 50z" fill="#20252e" />
    <path d="M76 82 84 85 67 108z" fill="#c9c4b0" />
    <path d="M92 52 94 53 81 82" stroke="#8c97a5" strokeWidth="1.500" fill="none" />
    <path d="M86 62 94 64M79 77 86 79" stroke="#cfd4da" strokeWidth="1.600" />
  </Tile>
);

const Terminal = () => (
  <Tile running>
    <rect x="9.400" y="23.500" width="84" height="74" rx="3.500" fill="#b6bcc0" />
    <rect x="10.400" y="25" width="82" height="71.500" rx="3" fill="#050505" />
    <rect x="14.500" y="30" width="74" height="61.500" fill="#282829" />
    <path d="M20.500 36.500 31.500 41.300 20.500 46" fill="none" stroke="#fff" strokeWidth="2.800" />
    <path d="M33 49.500H44.500" stroke="#fff" strokeWidth="2.600" />
  </Tile>
);

const Sublime = () => (
  <Tile running>
    <Grad id="su" a="#8a8a8a" b="#4b4b4b" c="#636363" />
    <path d="M12.300 28Q12.500 26 15 26H90Q92.500 26 92.700 28L98 95Q98 99.500 94 99.500H10Q5.500 99.500 6 95z" fill="#e4e4e4" />
    <path d="M10.500 78H91.500V88Q91.500 91 88 91H14Q10.500 91 10.500 88z" fill="#222" />
    <path d="M16.500 23Q17 20.500 20 20.500H84Q87 20.500 87.200 23L91.500 82H10.500z" fill="url(#su)" />
    <path d="M10.500 82H91.500" stroke="#8f8f8f" strokeWidth="1.200" />
    <text x="51" y="67.500" fontSize="49" fontWeight="700" textAnchor="middle" fill="#fb9a2b" stroke="#fb9a2b" strokeWidth="1" fontFamily="Roboto, sans-serif">S</text>
  </Tile>
);

const Firefox = () => (
  <Tile running>
    <defs>
      <radialGradient id="fg" cx=".45" cy=".2" r=".8"><stop offset="0" stopColor="#2fb5e8" /><stop offset=".5" stopColor="#1467ad" /><stop offset="1" stopColor="#1b2358" /></radialGradient>
      <linearGradient id="ff" x1="0" y1="0" x2=".3" y2="1"><stop offset="0" stopColor="#f08a2d" /><stop offset=".6" stopColor="#e7602a" /><stop offset="1" stopColor="#cf322c" /></linearGradient>
      <linearGradient id="fy" x1="0" y1="0" x2="0" y2="1"><stop offset="0" stopColor="#fff2a0" /><stop offset=".5" stopColor="#fbc62c" /><stop offset="1" stopColor="#e8701e" /></linearGradient>
    </defs>
    <circle cx="52" cy="53" r="39" fill="url(#fg)" />
    <path d="M70 20Q94 30 98.500 54Q101 76 86 94Q72 106 52 104Q74 92 77 68Q80 42 70 20z" fill="url(#fy)" />
    <path d="M77 74 90 52Q91 66 86 76Q94 70 98 62Q98 84 82 97Q68 107 50 105L60 90Q72 84 77 74z" fill="#ec7a20" />
    <path d="M12 22Q15 29 19 33Q30 28 43 27L41 40Q48 38 50 43Q46 50 40 51Q44 58 38 62Q30 70 34 80Q46 84 55 76Q62 77 60 83Q54 90 46 91Q60 94 74 86Q68 106 46 105Q16 102 8 76Q3 56 11 42Q10 32 12 22z" fill="url(#ff)" />
    <path d="M41 41Q49 38 50 43Q46 47 40 47z" fill="#f6e3cc" />
  </Tile>
);

const Chrome = () => (
  <Tile>
    <circle cx="52.500" cy="62" r="43" fill="rgba(20,50,70,.3)" />
    <circle cx="52.500" cy="61" r="43" fill="#fbd335" />
    <path d="M36 70 17.500 38A43 43 0 0 0 50 104L69 70z" fill="#5fba60" />
    <path d="M36 70 17.500 38A43 43 0 0 1 91 42H52.500z" fill="#e53c37" />
    <path d="M52.500 42H91.200A43 43 0 0 1 50 104L69 70z" fill="#fbd335" />
    <circle cx="52.500" cy="61" r="19.500" fill="#f4f6f8" />
    <circle cx="52.500" cy="61" r="16.300" fill="#4489cb" />
  </Tile>
);

const Preferences = () => (
  <Tile>
    <Grad id="pr" a="#cfdfe4" b="#747474" c="#a2aaad" />
    <rect x="10.700" y="22" width="84" height="79" rx="3" fill="url(#pr)" />
    <circle cx="52.800" cy="61" r="34.800" fill="#202122" />
    <circle cx="52.800" cy="61" r="27.500" fill="none" stroke="#b7b7b5" strokeWidth="4.500" strokeDasharray="3.200 2.559" />
    <circle cx="52.800" cy="61" r="23" fill="#3c3c3c" stroke="#b2b2af" strokeWidth="5.500" />
    <path d="M52.800 61H76M52.800 61 41.500 41M52.800 61 41.500 81" stroke="#b9b9b6" strokeWidth="5" />
    <circle cx="52.800" cy="61" r="4.500" fill="#8b8b8b" stroke="#d5d5d3" strokeWidth="1.200" />
  </Tile>
);

const Zip = () => (
  <Tile>
    <rect x="21" y="23" width="64.500" height="49" rx="2" fill="#6bcaf8" />
    <path d="M25 18H54L62 24V40H25z" fill="#f0f0f0" stroke="#d0d0d0" strokeWidth=".6" />
    <path d="M21.500 23H54Q66 24 66 42Q78 42 84 60V104.500H21.500z" fill="#fcfcfc" />
    <path d="M55 20Q66 28 62 43Q74 40 82 54Q74 28 55 20z" fill="#e4e5e6" stroke="#c3c4c6" strokeWidth=".6" />
    <rect x="48" y="23" width="9.500" height="46.500" rx="3" fill="#2f3133" />
    <path d="M52.800 24V68" stroke="#cdd0d2" strokeWidth="4.500" strokeDasharray="1.500 1.500" />
    <rect x="49" y="31" width="7.500" height="20" rx="3.500" fill="#8d9398" stroke="#3a3c3f" strokeWidth=".8" />
    <circle cx="52.800" cy="47" r="2" fill="#222" />
    <text x="52.800" y="99.500" fontSize="12.500" textAnchor="middle" fill="#6c6c6c">ZIP</text>
  </Tile>
);

const Trash = () => (
  <Tile>
    <defs>
      <linearGradient id="tr" x1="0" x2="1" y1="0" y2="0"><stop offset="0" stopColor="#f2f3f5" /><stop offset=".3" stopColor="#dfe2e5" /><stop offset=".7" stopColor="#e3e5e8" /><stop offset="1" stopColor="#f8f8f9" /></linearGradient>
    </defs>
    <path d="M18.400 27 27.500 94Q30 105 53.400 105T79.500 94L88.300 27z" fill="url(#tr)" opacity=".96" />
    <ellipse cx="53.400" cy="26.500" rx="34.500" ry="7.800" fill="#b0c3cb" stroke="#eef1f3" strokeWidth="1.800" />
    <path d="M28 92Q53 104 79 92Q78 104 53.400 104.500T28 92z" fill="#fafafa" opacity=".7" />
  </Tile>
);

/* ---------- assembled screen ---------- */

const tabs = [
  { title: 'Web Developer Portfol…', icon: null, ls: 0.2, gap: 0 },
  { title: '#lexhacks hashta…', icon: <FaTwitter size={31} color="#62aeea" />, ls: 0.25, gap: 16 },
  { title: 'Rules | LexHacks …', icon: <LexIcon />, ls: 0.15, gap: 13 },
  { title: 'Make a Mark – Be…', icon: <W3Icon />, ls: 0.1, gap: 12 },
  { title: 'W3Cx - Free Cour…', icon: <EdxIcon />, ls: 0.1, gap: 12 },
  { title: 'edwardbryant (Ed…', icon: <FaGithub size={33} color="#242424" />, ls: 0.15, gap: 14 },
  { title: 'The Never-Ending Gro…', icon: null, ls: 0.2, gap: 0, active: true },
];

const menu: [string, number][] = [
  ['File', 82], ['Edit', 88], ['View', 99.5], ['History', 129.5], ['Bookmarks', 186], ['Tools', 105.5], ['Window', 142], ['Help', 90],
];

const items = ['Vitamin Water', 'Pop Tarts', 'Vodka', 'Rice Cakes'];

export default function App() {
  return (
    <Desktop>
      <GlobalStyle />
      <MenuBar>
        <MenuGroup>
          <AppleSlot><FaApple size={34} /></AppleSlot>
          <MenuItem $w={133} $bold>Firefox</MenuItem>
          {menu.map(([label, w]) => <MenuItem key={label} $w={w}>{label}</MenuItem>)}
        </MenuGroup>
        <MenuGroup><StatusIcons /></MenuGroup>
      </MenuBar>

      <Window>
        <TabStrip>
          <Lights>
            <Light $fill="#ff5f57" $edge="#e0443e" />
            <Light $fill="#ffbe2f" $edge="#dfa023" />
            <Light $fill="#28cb41" $edge="#1aab29" />
          </Lights>
          {tabs.map((t, i) => (
            <Tab key={t.title} $active={t.active} $divider={i < 5}>
              {t.active && (
                <TabShape width="386" height="64" viewBox="0 0 386 64">
                  <defs>
                    <linearGradient id="tabFill" x1="0" y1="0" x2="0" y2="1">
                      <stop offset="0" stopColor="#fdfdfd" />
                      <stop offset="1" stopColor="#efefef" />
                    </linearGradient>
                  </defs>
                  <path d="M2 63C20 62 23 50 27 34C31 14 37 5 60 5H324C347 5 353 14 357 34C361 50 364 62 382 63z" fill="url(#tabFill)" />
                  <path d="M2 61.500C20 61 23 50 27 34C31 14 37 5 60 5H324C347 5 353 14 357 34C361 50 364 61 382 61.500" fill="none" stroke="#a3a3a3" strokeWidth="2" />
                </TabShape>
              )}
              {t.icon && <TabIcon $gap={t.gap}>{t.icon}</TabIcon>}
              <TabTitle $ls={t.ls}>{t.title}</TabTitle>
              <TabClose><CloseX /></TabClose>
            </Tab>
          ))}
          <NewTab>
            <svg width="20" height="20" viewBox="0 0 20 20">
              <path d="M10 0V20M0 10H20" stroke="#808080" strokeWidth="3.600" />
              <path d="M10 1V19M1 10H19" stroke="#a6a6a6" strokeWidth="1.600" />
            </svg>
          </NewTab>
        </TabStrip>

        <NavArea>
          <NavBar>
            <BackButton>
              <svg width="30" height="32" viewBox="0 0 30 32">
                <path d="M16 5 5.500 16 16 27M7 16H25" fill="none" stroke="#a2a2a2" strokeWidth="7.500" strokeLinecap="round" strokeLinejoin="round" />
              </svg>
            </BackButton>
            <Field $w={1593} $url>
              <GlobeIcon />
              <FieldText $ml={10} $ls={0.42}>file:///Users/Edward/Projects/personal/never-ending-grocery-list-app/index.html</FieldText>
              <svg width="20" height="14" viewBox="0 0 20 14"><path d="M1 1H19L10 13.500z" fill="#e6e6e6" stroke="#bdbdbd" strokeWidth="1.400" /></svg>
              <ToolCell $w={39} $ml={5}><ReloadIcon /></ToolCell>
            </Field>
            <Field $w={486}>
              <svg width="28" height="28" viewBox="0 0 28 28">
                <circle cx="10" cy="10" r="8.300" fill="none" stroke="#9a9a9a" strokeWidth="3.200" />
                <path d="M16 16 26 26" stroke="#9a9a9a" strokeWidth="4.200" />
              </svg>
              <FieldText $ml={11} $ls={0.45}>moo cards</FieldText>
              <svg width="22" height="22" viewBox="0 0 22 22">
                <path d="M0 11H18M9 1.500 18.500 11 9 20.500" fill="none" stroke="#444" strokeWidth="4" />
              </svg>
            </Field>
            <ToolCell $w={54} $ml={12}>
              <svg width="32" height="32" viewBox="0 0 32 32">
                <path d="M16 3.500 19.800 11.900 29 12.900 22.100 19.100 24 28.200 16 23.600 8 28.200 9.900 19.100 3 12.900 12.200 11.900z" fill="none" stroke="#4b4b4b" strokeWidth="3.800" />
              </svg>
            </ToolCell>
            <ToolDivider $h={36} $ml={0} $c="#bcbcbc" />
            <ToolCell $w={52}>
              <svg width="28" height="30" viewBox="0 0 28 30">
                <path d="M14 0 20 6H25Q28 6 28 9V27Q28 30 25 30H3Q0 30 0 27V9Q0 6 3 6H8z" fill="#4b4b4b" />
                <path d="M9 11H24M9 18H24M9 25H24" stroke="#ddd" strokeWidth="4" />
                <path d="M4 11H7M4 18H7M4 25H7" stroke="#ddd" strokeWidth="3.500" />
              </svg>
            </ToolCell>
            <ToolCell $w={64} $ml={4}>
              <svg width="28" height="28" viewBox="0 0 28 28">
                <path d="M8 2Q8 0 10 0H18Q20 0 20 2V14H28L16 27Q14 28.500 12 27L0 14H8z" fill="#2d9afd" />
              </svg>
            </ToolCell>
            <ToolCell $w={64}>
              <svg width="32" height="28" viewBox="0 0 32 28">
                <path d="M1.500 14.500 16 1.500 30.500 14.500" fill="none" stroke="#4b4b4b" strokeWidth="2.800" />
                <path d="M16 6.500 26 15.500V28H19V18H14V28H6V15.500z" fill="#4b4b4b" />
              </svg>
            </ToolCell>
            <ToolCell $w={64}>
              <svg width="32" height="31" viewBox="0 0 32 31">
                <path d="M16 0C25 0 32 6 32 14S25 28 16 28Q12 28 9 27Q6 31 1 30.500Q4 28 4 24Q0 20 0 14C0 6 7 0 16 0z" fill="#4b4b4b" />
                <circle cx="11" cy="9.500" r="2.600" fill="#dedede" />
                <circle cx="21" cy="9.500" r="2.600" fill="#dedede" />
                <path d="M6 16H26Q24 24 16 24T6 16z" fill="#dedede" />
              </svg>
            </ToolCell>
            <ToolDivider $h={76} $ml={10} $c="linear-gradient(rgba(160,170,180,.3), #a3abb3, rgba(160,170,180,.3))" />
            <ToolCell $w={84}>
              <svg width="32" height="27" viewBox="0 0 32 27">
                <path d="M3 3.500H29M3 13.500H29M3 23.500H29" stroke="#4b4b4b" strokeWidth="6" strokeLinecap="round" />
              </svg>
            </ToolCell>
          </NavBar>
          <Bookmarks>
            <Bookmark $w={217} $gap={10}>
              <FolderIcon /><span>Most Visited</span>
              <svg width="13" height="8" viewBox="0 0 13 8"><path d="M0 0H13L6.500 8z" fill="#7b7b7b" /></svg>
            </Bookmark>
            <Bookmark $w={148} $gap={9}><FaGithub size={33} color="#1b1b1b" /><span>GitHub</span></Bookmark>
            <Bookmark $w={228} $gap={14}><UdacityMark /><span>FS Nanodegree</span></Bookmark>
            <Bookmark $w={159} $gap={10}><SeedboxIcon /><span>seedbox</span></Bookmark>
            <Bookmark $w={240} $gap={9}><BlackboardBadge>Bb</BlackboardBadge><span>Blackboard Learn</span></Bookmark>
          </Bookmarks>
        </NavArea>

        <Viewport>
          <Page>
            <TitleBlock>
              <TitleThe>The</TitleThe>
              <TitleNever>NEVER-ENDING</TitleNever>
              <TitleGrocery>GROCERY LIST</TitleGrocery>
            </TitleBlock>
            <BagSlot><BagIcon /></BagSlot>
            <SectionTitle $mt={82}>ADD THIS</SectionTitle>
            <AddCard>
              <ChevronSlot>
                <svg width="23" height="38" viewBox="0 0 23 38">
                  <path d="M3 2.500 19.500 19 3 35.500" fill="none" stroke={INK} strokeWidth="5" />
                </svg>
              </ChevronSlot>
              <AddInput><Caret />type name of new item here</AddInput>
              <AddIcon>
                <svg width="57" height="58" viewBox="0 0 57 58">
                  <rect width="57" height="58" rx="11" fill="#158f48" />
                  <rect x="23.500" y="10" width="10" height="38.500" rx="2.500" fill={CREAM} />
                  <rect x="9.300" y="24.300" width="38.500" height="10" rx="2.500" fill={CREAM} />
                </svg>
              </AddIcon>
            </AddCard>
            <SectionTitle $mt={46}>NEED 5 ITEMS</SectionTitle>
            <List>
              {items.map((name) => (
                <Item key={name}>
                  <Check />
                  <ItemName>{name} × <Qty>1</Qty></ItemName>
                  <RemoveIcon />
                </Item>
              ))}
            </List>
          </Page>
          <Scrollbar><Thumb /></Scrollbar>
          <DockShade />
        </Viewport>
      </Window>

      <DockZone>
        <WindowEdge />
        <DockRow>
          <Wallpaper $w={86}>
            <svg width="86" height="130" viewBox="0 0 86 130">
              <circle cx="19.500" cy="33" r="2.500" fill="#6fb4d6" />
              <circle cx="24" cy="59" r="3.500" fill="#6cb5dc" />
              <circle cx="10" cy="99" r="1.800" fill="#3f86ae" />
              <circle cx="84" cy="98" r="1.500" fill="#3f86ae" />
            </svg>
          </Wallpaper>
          <Dock>
            <Finder /><Launchpad /><Mail /><Calculator /><Calendar /><Notes /><Maps /><Messages />
            <ITunes /><AppStore /><Safari /><Designer /><ColorPicker /><Truck /><Python /><Terminal />
            <Sublime /><Firefox /><Chrome /><Preferences />
            <DockSeparator />
            <Zip /><Trash />
          </Dock>
          <Wallpaper $w={86}>
            <svg width="86" height="130" viewBox="0 0 86 130" fontFamily={SANS}>
              <circle cx="71" cy="34" r="2" fill="#4f94ae" /><circle cx="70" cy="42" r="2" fill="#5ba4bf" />
              <circle cx="54" cy="43" r="2" fill="#47899f" /><circle cx="62" cy="64" r="2" fill="#58a9c8" />
              <circle cx="61" cy="74" r="1.800" fill="#4c97b4" /><circle cx="37" cy="86" r="2" fill="#4c97b4" />
              <circle cx="14" cy="97" r="3" fill="#6fc2dd" /><circle cx="48" cy="94" r="1.800" fill="#4c97b4" />
              <rect y="103" width="86" height="27" fill="#6b93aa" />
              <circle cx="81" cy="102" r="2.500" fill="#8fd4e8" />
              <text x="0" y="120" fontSize="10" fill="#2f6a8a" textLength="67" lengthAdjust="spacingAndGlyphs">.COM</text>
            </svg>
          </Wallpaper>
        </DockRow>
      </DockZone>
    </Desktop>
  );
}
